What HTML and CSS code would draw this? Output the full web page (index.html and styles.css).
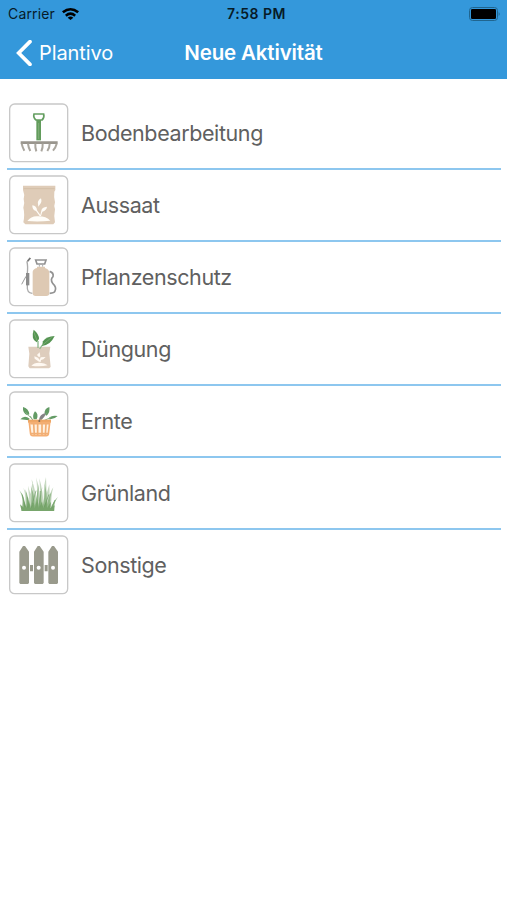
FILE: index.html
```html
<!DOCTYPE html>
<html lang="de">
<head>
<meta charset="utf-8">
<title>Neue Aktivität</title>
<link rel="stylesheet" href="styles.css">
</head>
<body>
<header class="header">
  <div class="status">
    <div class="carrier"><span class="carrier-name">Carrier</span>
      <svg class="wifi" viewBox="0 0 51 36"><path d="M0 10Q25.500-10 51 10L46 16Q25.500-1 5 16ZM9 20Q25.500 6 42 20L37 26Q25.500 16 14 26ZM17 29Q25.500 22 34 29L25.500 36Z"/></svg>
    </div>
    <time class="clock">7:58 PM</time>
    <svg class="battery" viewBox="0 0 96 42"><rect x="1.500" y="1.500" width="84" height="39" rx="9" fill="none" stroke="#20658f" stroke-width="3"/><rect x="6" y="6" width="75" height="30" rx="4"/><path d="M89 15q6 6 0 12Z" fill="#20658f"/></svg>
  </div>
  <nav class="nav">
    <a class="back"><svg class="chevron" viewBox="0 0 48 78"><path d="M42 5L8 39L42 73" fill="none" stroke="#fff" stroke-width="11" stroke-linecap="round"/></svg><span class="back-label">Plantivo</span></a>
    <h1 class="title">Neue Aktivität</h1>
  </nav>
</header>
<main class="list">
  <div class="row">
    <svg class="icon" viewBox="27 24 180 180"><rect class="frame" x="29" y="27" width="174" height="173" rx="15"/>
      <path d="M102 57H131Q134 68 126 75H108Q99 68 102 57Z" fill="none" stroke="#649e60" stroke-width="5"/><path d="M116 75V136" stroke="#629c5c" stroke-width="14"/><path d="M116 84V132" stroke="#82ae7a" stroke-width="3"/>
      <path d="M62 139H173V147H62Z" fill="#99958d"/><path d="M65 146Q67 156 73 167M84 146Q85 157 91 168M106 146Q105 158 109 169M128 146Q129 158 124 169M149 146Q149 158 142 168M170 146Q167 158 159 167" fill="none" stroke="#aaa69e" stroke-width="6"/></svg>
    <span class="label">Bodenbearbeitung</span>
  </div>
  <div class="row">
    <svg class="icon" viewBox="27 24 180 180"><rect class="frame" x="29" y="27" width="174" height="173" rx="15"/>
      <path d="M69 56H166V69L163 74Q161 91 165 106Q161 116 165 127Q161 145 165 166L160 172H76L70 166Q75 142 70 122Q75 108 71 96Q75 83 69 69Z" fill="#dfccb8"/><path d="M71 65H164" stroke="#d3bfa8" stroke-width="3"/>
      <path d="M82 162Q94 146 115 148Q139 148 151 161Q116 165 82 162ZM119 147L108 132Q96 129 97 115Q110 116 111 130L121 144L124 131Q125 120 141 119Q140 130 127 134L123 147ZM114 111Q111 102 123 94Q127 106 119 113L115 119Z" fill="#fffdf8"/></svg>
    <span class="label">Aussaat</span>
  </div>
  <div class="row">
    <svg class="icon" viewBox="27 24 180 180"><rect class="frame" x="29" y="27" width="174" height="173" rx="15"/>
      <path d="M98 98Q99 90 111 87V83H135V87Q146 90 148 99V163Q148 171 139 171H107Q98 171 98 163Z" fill="#dec9b3"/><path d="M107 63H138L134 75H111Z" fill="none" stroke="#929292" stroke-width="5"/><path d="M118 76V83M128 76V83" stroke="#aaa" stroke-width="3"/>
      <path d="M91 57L81 69Q84 80 82 103V142Q80 161 97 163" fill="none" stroke="#aaa" stroke-width="4"/><path d="M91 57L83 66" stroke="#777" stroke-width="5"/><path d="M83 102V139" stroke="#8b8b8b" stroke-width="10"/><path d="M78 112L65 136" stroke="#999" stroke-width="3"/>
      <path d="M149 97Q162 101 159 113Q150 121 158 133Q171 145 165 156Q163 162 149 163" fill="none" stroke="#929292" stroke-width="5"/></svg>
    <span class="label">Pflanzenschutz</span>
  </div>
  <div class="row">
    <svg class="icon" viewBox="27 24 180 180"><rect class="frame" x="29" y="27" width="174" height="173" rx="15"/>
      <path d="M85 107H151L148 127L152 168L147 172H89L85 166L88 128Z" fill="#decdbd"/><path d="M94 164Q103 154 119 155Q134 155 143 163Q120 168 94 164ZM117 152L104 143L103 136L114 140L119 147L122 139L137 138L130 145L123 147L122 153ZM111 132L119 124L121 136L117 139Z" fill="#fff9f2"/>
      <path d="M114 90V111M127 102L119 114" stroke="#8bb98c" stroke-width="4"/><path d="M101 56Q118 70 117 84L110 94Q92 84 101 56Z" fill="#559452"/><path d="M164 75Q139 76 129 91L126 105Q151 103 164 75Z" fill="#559452"/><path d="M102 64L111 89M155 79L129 101" stroke="#87b47e" stroke-width="2"/></svg>
    <span class="label">Düngung</span>
  </div>
  <div class="row">
    <svg class="icon" viewBox="27 24 180 180"><rect class="frame" x="29" y="27" width="174" height="173" rx="15"/>
      <path d="M69 72Q86 76 88 94L82 97Q67 90 69 72ZM61 109Q73 95 89 107L86 112ZM105 85Q117 93 110 109H101Q96 97 105 85ZM148 72Q132 76 134 94L140 98Q151 87 148 72ZM144 108Q154 95 173 99Q160 112 144 108Z" fill="#639b65"/><path d="M77 88L99 111M91 99L97 110M139 92Q129 103 122 112M152 104L133 112" fill="none" stroke="#8db78b" stroke-width="3"/><path d="M138 91Q119 92 116 113Q130 111 138 91Z" fill="#858286"/>
      <path d="M84 110H153V119H84Z" fill="#eda564"/><path d="M88 119H149L145 153Q144 158 139 158H98Q93 158 92 153Z" fill="#fff1e1" stroke="#f5ae72" stroke-width="5"/><path d="M91 122H147M101 122L103 156M113 122V156M126 122V156M138 122L136 156M92 152H146" stroke="#f1ae74" stroke-width="5"/><circle cx="118" cy="114" r="3" fill="#77685a"/></svg>
    <span class="label">Ernte</span>
  </div>
  <div class="row">
    <svg class="icon" viewBox="27 24 180 180"><rect class="frame" x="29" y="27" width="174" height="173" rx="15"/>
      <g fill="#c7d9c2"><path d="M75 165Q79 120 70 98Q88 126 87 165ZM87 165Q91 109 99 74Q95 114 103 165ZM99 165Q102 98 94 72Q109 106 113 165ZM110 165Q113 93 108 67Q121 102 121 165ZM121 165Q121 110 118 70Q131 112 131 165ZM132 165Q128 100 138 66Q138 113 146 165ZM140 165Q148 110 160 97Q152 123 154 165ZM90 165L84 92L106 165ZM126 165L148 88L150 165Z"/></g>
      <g fill="#92b889"><path d="M64 167Q74 129 57 104Q77 125 77 167ZM77 167Q82 132 76 103Q89 135 89 167ZM89 167Q100 118 92 94Q108 127 103 167ZM101 167Q111 121 116 87Q115 126 114 167ZM113 167Q120 117 127 96Q121 125 127 167ZM125 167Q137 120 134 86Q145 126 139 167ZM137 167Q145 125 154 111Q148 139 151 167ZM149 167Q158 139 174 126Q160 143 163 167Z"/></g>
      <path d="M65 168L60 148L71 158L72 139L80 159L87 135L92 160L101 141L104 160L112 132L117 160L126 139L130 160L140 137L141 159L153 140L151 160L164 151L162 168Z" fill="#78a66c"/><path d="M74 155L67 119M94 158L108 107M119 158L121 108M132 157L147 118M155 160L165 135M84 158L83 127" stroke="#6a9a60" stroke-width="2"/></svg>
    <span class="label">Grünland</span>
  </div>
  <div class="row">
    <svg class="icon" viewBox="27 24 180 180"><rect class="frame" x="29" y="27" width="174" height="173" rx="15"/>
      <path d="M58 74L69 57H75L87 74V168L84 171H61L58 168ZM102 74L113 57H119L131 74V168L128 171H105L102 168ZM145 74L156 57H162L174 74V168L171 171H148L145 168ZM90 114H99V133H90ZM134 114H143V133H134Z" fill="#999a8c"/><g fill="#fff"><circle cx="72" cy="122" r="6"/><circle cx="116" cy="122" r="6"/><circle cx="159" cy="122" r="6"/></g></svg>
    <span class="label">Sonstige</span>
  </div>
</main>
</body>
</html>
```
FILE: styles.css
```css
* { box-sizing: border-box; }
body { margin: 0; background: #fff; font-family: Inter, "Liberation Sans", sans-serif; }
.header { height: 79px; background: #3498db; }
.status { display: grid; grid-template-columns: 1fr auto 1fr; align-items: center; height: 27px; padding: 0 6px 0 8px; color: #071b28; }
.carrier { display: flex; align-items: center; gap: 7px; }
.carrier-name { font-size: 14px; letter-spacing: .15px; }
.wifi { width: 17px; height: 12px; }
.clock { margin-left: 4px; font-size: 14px; font-weight: 600; letter-spacing: .5px; }
.battery { justify-self: end; width: 32px; height: 14px; }
.nav { display: grid; grid-template-columns: 1fr auto 1fr; align-items: center; height: 52px; color: #fff; }
.back { display: flex; align-items: center; gap: 7px; padding-left: 16px; }
.chevron { width: 16px; height: 26px; }
.back-label { font-size: 20px; letter-spacing: -.1px; }
.title { margin: 0 0 2px; font-size: 20.5px; font-weight: 600; letter-spacing: -.15px; }
.list { padding: 24px 6px 0 7px; }
.row { display: flex; align-items: flex-start; height: 72.08px; padding-left: 2px; }
.row:not(:last-child) { background: linear-gradient(#8dc7ef, #8dc7ef) 0 65px / 100% 2px no-repeat; }
.icon { flex: none; width: 60px; height: 60px; }
.frame { fill: #fff; stroke: #c8c8c8; stroke-width: 4; }
.label { margin-left: 12px; color: #606060; font-size: 21.5px; line-height: 60px; letter-spacing: -.4px; }
```
